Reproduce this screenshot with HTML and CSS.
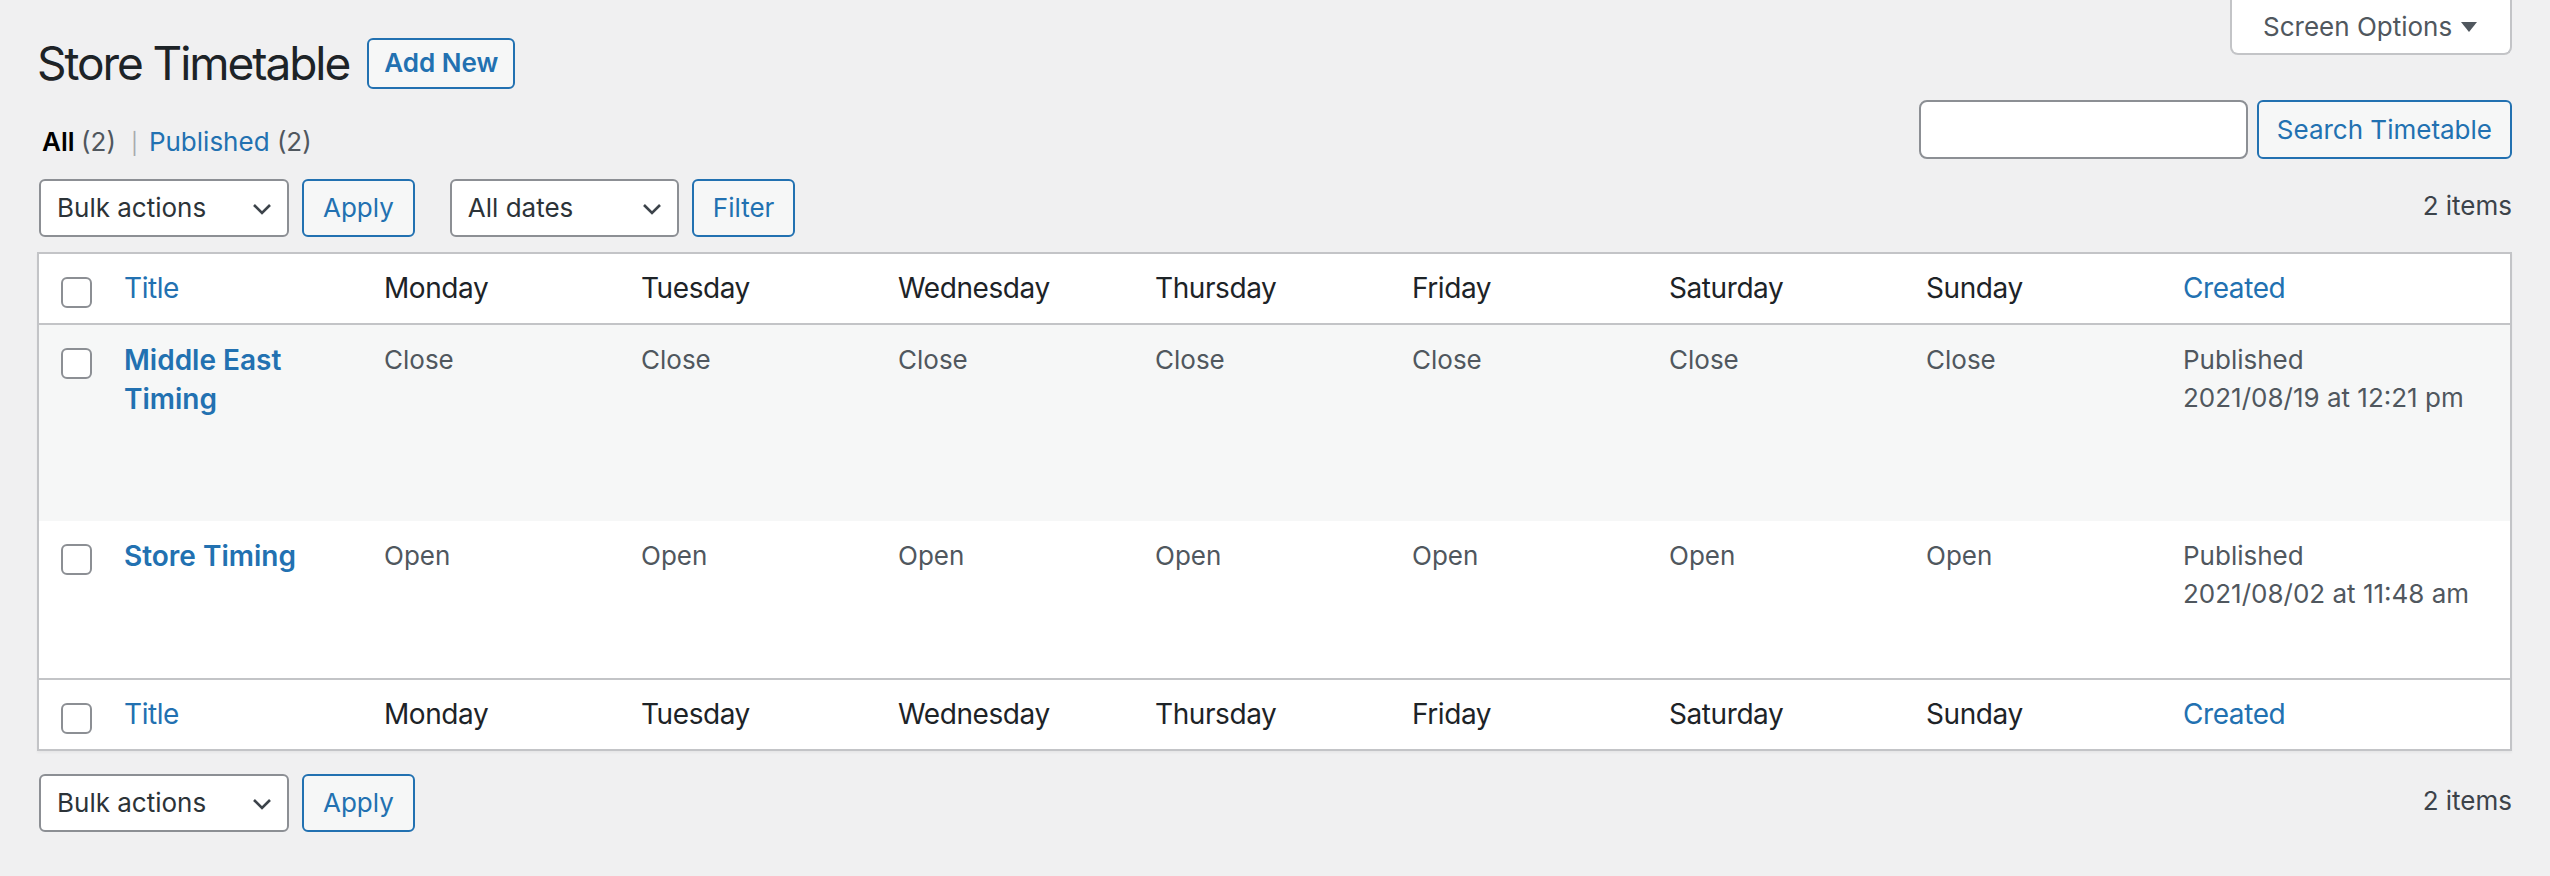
FILE: index.html
```html
<!DOCTYPE html>
<html lang="en">
<head>
    <meta charset="UTF-8">
    <meta name="viewport" content="width=device-width, initial-scale=1.0">
    <title>Store Timetable</title>
    <link rel="stylesheet" href="styles.css">
</head>
<body>
    <div class="wrap">
        <!-- Title row + screen options tab -->
        <div class="top-row">
            <div class="page-head">
                <h1>Store Timetable</h1>
                <a href="#" class="button page-title-action">Add New</a>
            </div>
            <button type="button" class="screen-options">
                <span>Screen Options</span>
                <svg width="16" height="10" viewBox="0 0 16 10"><path d="M0 0h16L8 10z"/></svg>
            </button>
        </div>

        <!-- Views + search -->
        <div class="list-head">
            <ul class="subsubsub">
                <li><a href="#" class="current">All <span class="count">(2)</span></a></li>
                <li class="sep">|</li>
                <li><a href="#">Published <span class="count">(2)</span></a></li>
            </ul>
            <form class="search-box">
                <input type="search" id="post-search-input">
                <button type="button" class="button">Search Timetable</button>
            </form>
        </div>

        <div class="tablenav top">
            <div class="actions">
                <span class="select select-bulk">
                    <select><option>Bulk actions</option></select>
                    <svg class="chevron" viewBox="0 0 20 12"><path d="M2 2l8 8 8-8"/></svg>
                </span>
                <button type="button" class="button">Apply</button>
            </div>
            <div class="actions">
                <span class="select select-dates">
                    <select><option>All dates</option></select>
                    <svg class="chevron" viewBox="0 0 20 12"><path d="M2 2l8 8 8-8"/></svg>
                </span>
                <button type="button" class="button">Filter</button>
            </div>
            <span class="displaying-num">2 items</span>
        </div>

        <table class="wp-list-table">
            <colgroup>
                <col class="col-cb">
                <col class="col-title">
                <col class="col-day"><col class="col-day"><col class="col-day"><col class="col-day">
                <col class="col-day"><col class="col-day"><col class="col-day">
                <col>
            </colgroup>
            <thead>
                <tr>
                    <td class="check-column"><input type="checkbox"></td>
                    <th><a href="#">Title</a></th>
                    <th>Monday</th>
                    <th>Tuesday</th>
                    <th>Wednesday</th>
                    <th>Thursday</th>
                    <th>Friday</th>
                    <th>Saturday</th>
                    <th>Sunday</th>
                    <th><a href="#">Created</a></th>
                </tr>
            </thead>
            <tbody>
                <tr>
                    <td class="check-column"><input type="checkbox"></td>
                    <td class="column-title"><a href="#" class="row-title">Middle East Timing</a></td>
                    <td>Close</td>
                    <td>Close</td>
                    <td>Close</td>
                    <td>Close</td>
                    <td>Close</td>
                    <td>Close</td>
                    <td>Close</td>
                    <td>Published<br>2021/08/19 at 12:21 pm</td>
                </tr>
                <tr>
                    <td class="check-column"><input type="checkbox"></td>
                    <td class="column-title"><a href="#" class="row-title">Store Timing</a></td>
                    <td>Open</td>
                    <td>Open</td>
                    <td>Open</td>
                    <td>Open</td>
                    <td>Open</td>
                    <td>Open</td>
                    <td>Open</td>
                    <td>Published<br>2021/08/02 at 11:48 am</td>
                </tr>
            </tbody>
            <tfoot>
                <tr>
                    <td class="check-column"><input type="checkbox"></td>
                    <th><a href="#">Title</a></th>
                    <th>Monday</th>
                    <th>Tuesday</th>
                    <th>Wednesday</th>
                    <th>Thursday</th>
                    <th>Friday</th>
                    <th>Saturday</th>
                    <th>Sunday</th>
                    <th><a href="#">Created</a></th>
                </tr>
            </tfoot>
        </table>

        <div class="tablenav bottom">
            <div class="actions">
                <span class="select select-bulk">
                    <select><option>Bulk actions</option></select>
                    <svg class="chevron" viewBox="0 0 20 12"><path d="M2 2l8 8 8-8"/></svg>
                </span>
                <button type="button" class="button">Apply</button>
            </div>
            <span class="displaying-num">2 items</span>
        </div>
    </div>
</body>
</html>
```

FILE: styles.css
```css
*, *::before, *::after {
    box-sizing: border-box;
}
body {
    margin: 0;
    background: #f0f0f1;
    color: #3c434a;
    font-family: Inter, "Noto Sans", sans-serif;
    font-size: 26px;
    line-height: 38px;
}
a {
    color: #2271b1;
    text-decoration: none;
}
.wrap {
    margin: 0 38px 0 37px;
}

/* title row */
.top-row {
    display: flex;
    justify-content: space-between;
    align-items: flex-start;
}
.page-head {
    display: flex;
    align-items: center;
    gap: 18px;
    margin-top: 33px;
}
h1 {
    margin: 0;
    font-size: 46px;
    line-height: 60px;
    font-weight: 400;
    color: #1d2327;
    letter-spacing: -0.045em;
}
.button {
    display: inline-flex;
    align-items: center;
    justify-content: center;
    height: 58px;
    padding: 0 20px;
    border: 2px solid #2271b1;
    border-radius: 6px;
    background: #f6f7f7;
    color: #2271b1;
    font: inherit;
    white-space: nowrap;
    cursor: pointer;
}
.page-title-action {
    height: 51px;
    padding: 0 15px;
    font-weight: 600;
}
.screen-options {
    display: flex;
    align-items: center;
    justify-content: space-between;
    width: 282px;
    height: 55px;
    padding: 0 33px 0 31px;
    background: #fff;
    border: 2px solid #c3c4c7;
    border-top: 0;
    border-radius: 0 0 8px 8px;
    color: #50575e;
    font: inherit;
}
.screen-options svg {
    fill: #50575e;
}

/* views + search */
.list-head {
    display: flex;
    justify-content: space-between;
    align-items: flex-start;
    height: 59px;
    margin-top: 7px;
}
.subsubsub {
    display: flex;
    align-items: baseline;
    margin: 25px 0 0 5px;
    padding: 0;
    list-style: none;
    line-height: 34px;
    color: #646970;
}
.subsubsub .current {
    color: #000;
    font-weight: 600;
}
.subsubsub .count {
    color: #50575e;
    font-weight: 400;
}
.subsubsub .sep {
    margin: 0 11px 0 15px;
    font-size: 21px;
    color: #a7aaad;
}
.search-box {
    display: flex;
    gap: 9px;
    margin: 0;
}
.search-box input {
    width: 329px;
    height: 59px;
    margin: 0;
    padding: 0 16px;
    border: 2px solid #8c8f94;
    border-radius: 8px;
    background: #fff;
    font: inherit;
}
.search-box .button {
    height: 59px;
    padding: 0 18px;
}

/* table nav */
.tablenav {
    display: flex;
    align-items: center;
    height: 58px;
}
.tablenav.top {
    margin: 20px 0 15px;
}
.tablenav.bottom {
    margin-top: 23px;
}
.tablenav .actions {
    display: flex;
    gap: 13px;
    margin-left: 2px;
}
.tablenav .actions + .actions {
    margin-left: 35px;
}
.tablenav .actions .button {
    padding: 0 19px;
}
.displaying-num {
    margin-left: auto;
    margin-bottom: 5px;
}
.select {
    position: relative;
    display: block;
}
.select select {
    appearance: none;
    -webkit-appearance: none;
    height: 58px;
    margin: 0;
    padding: 0 48px 0 16px;
    border: 2px solid #8c8f94;
    border-radius: 6px;
    background: #fff;
    color: #2c3338;
    font: inherit;
}
.select-bulk select {
    width: 250px;
}
.select-dates select {
    width: 229px;
}
.chevron {
    position: absolute;
    right: 17px;
    top: 24px;
    width: 20px;
    height: 12px;
    fill: none;
    stroke: #3c434a;
    stroke-width: 2.6;
    pointer-events: none;
}

/* list table */
.wp-list-table {
    width: 100%;
    table-layout: fixed;
    border-collapse: separate;
    border-spacing: 0;
    background: #fff;
    border: 2px solid #c3c4c7;
    box-shadow: 0 2px 2px rgba(0, 0, 0, 0.04);
}
.col-cb {
    width: 65px;
}
.col-title {
    width: 260px;
}
.col-day {
    width: 257px;
}
.wp-list-table th {
    padding: 15px 20px;
    font-size: 28px;
    line-height: 39px;
    font-weight: 400;
    text-align: left;
    color: #1d2327;
    letter-spacing: -0.015em;
}
.wp-list-table thead th,
.wp-list-table thead td {
    border-bottom: 2px solid #c3c4c7;
}
.wp-list-table tfoot th,
.wp-list-table tfoot td {
    border-top: 2px solid #c3c4c7;
}
.wp-list-table td {
    padding: 16px 20px;
    color: #50575e;
    vertical-align: top;
}
.wp-list-table tbody tr:nth-child(odd) {
    background: #f6f7f7;
}
.wp-list-table .check-column {
    padding: 23px 0 0 22px;
    vertical-align: top;
}
.check-column input {
    appearance: none;
    -webkit-appearance: none;
    display: block;
    width: 31px;
    height: 31px;
    margin: 0;
    border: 2px solid #8c8f94;
    border-radius: 6px;
    background: #fff;
}
.wp-list-table .column-title {
    padding-bottom: 102px;
}
.row-title {
    font-size: 28px;
    font-weight: 600;
}
```
